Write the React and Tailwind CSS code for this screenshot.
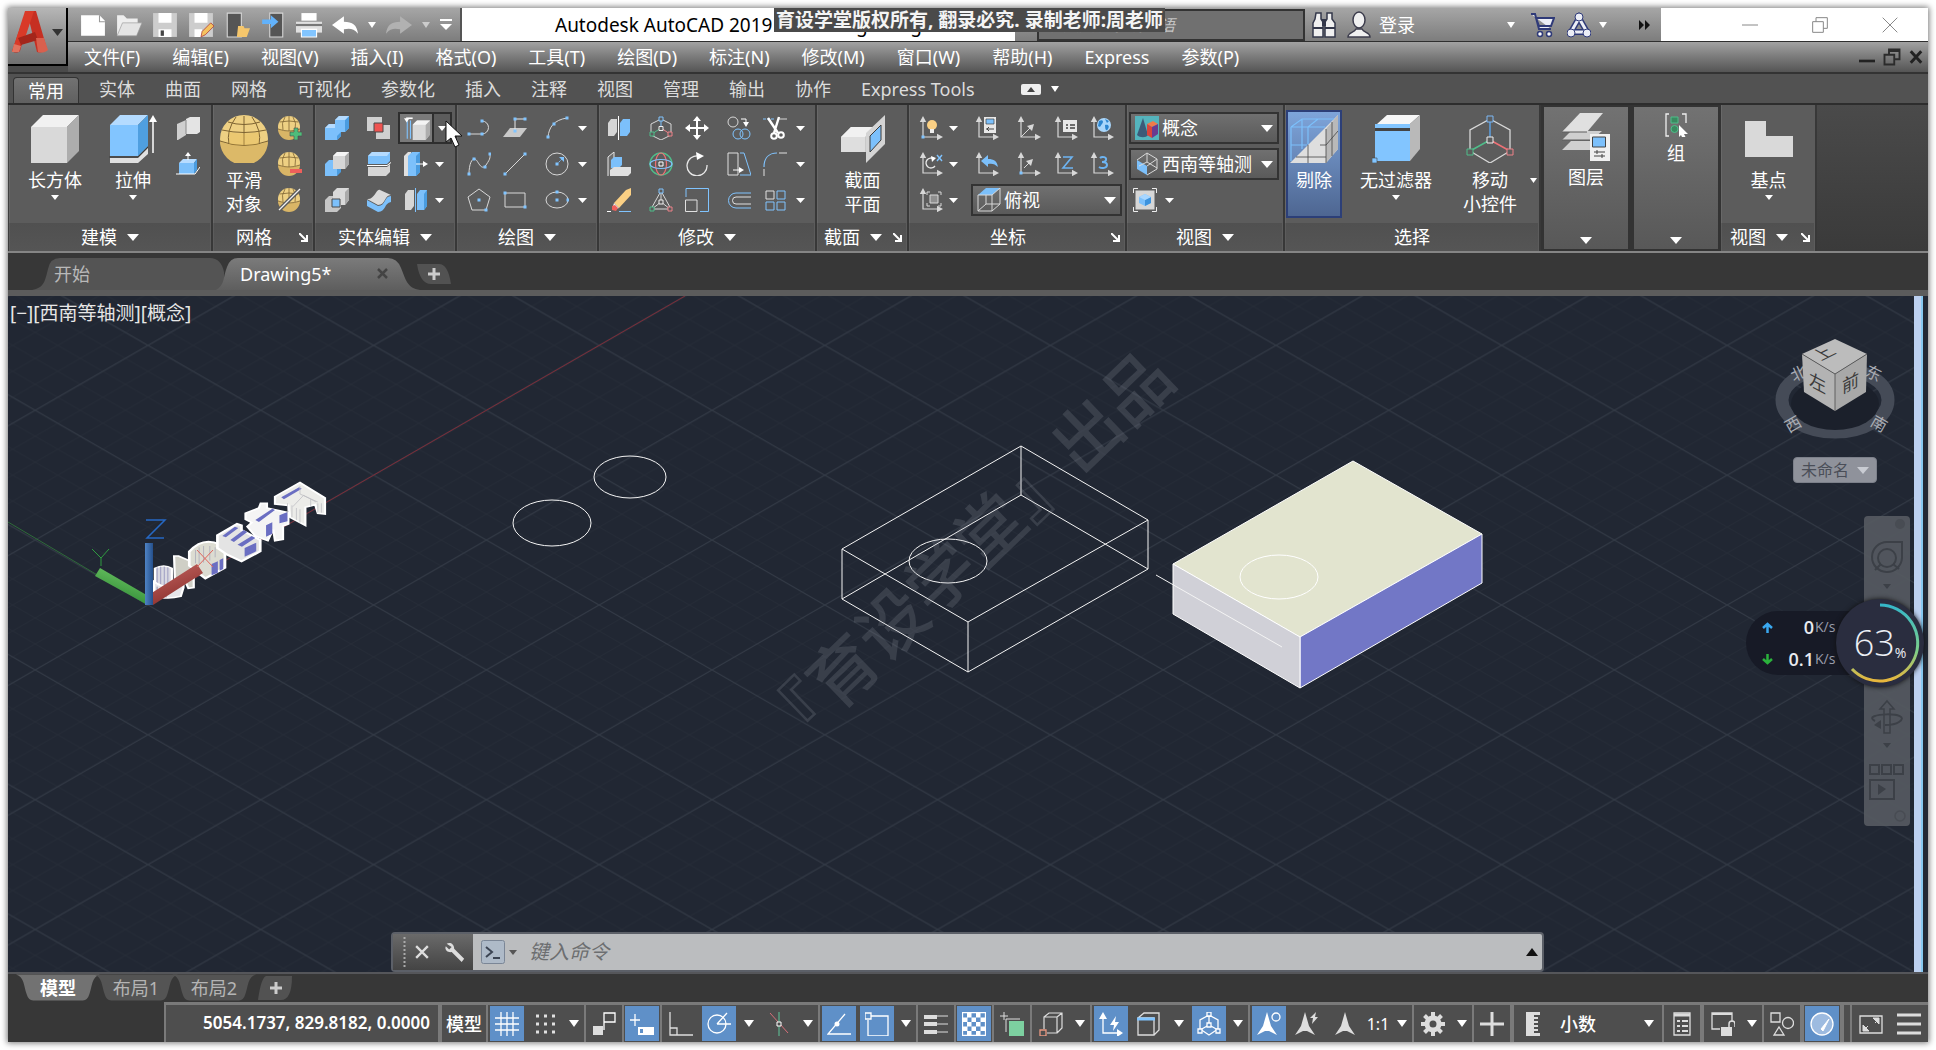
import React from 'react';

const Svg = ({ w = 24, h, vb, children, className = '' }) => (
  <svg width={w} height={h || w} viewBox={vb || '0 0 24 24'} fill="none" className={`shrink-0 ${className}`} aria-hidden="true">
    {children}
  </svg>
);

const Down = ({ w = 8, h = 5, fill = '#fff', className = '' }) => (
  <svg width={w} height={h} viewBox="0 0 10 6" preserveAspectRatio="none" className={`shrink-0 ${className}`} aria-hidden="true">
    <path d="M0 0h10L5 6z" fill={fill} />
  </svg>
);

const Ball = () => (
  <>
    <circle cx="11" cy="11" r="11" fill="#eed083" />
    <path d="M0 13c6 3 16 3 22 0a11 11 0 0 1-22 0" fill="#d9b566" />
    <path d="M1.500 6q9.500-2 19 0M0 13q11 4 22 0M7 1Q3 7 5 14M15 1q4 6 2 13M11 0v15" stroke="#7d6332" strokeWidth=".8" />
  </>
);

const Axes = ({ children }) => (
  <>
    <path d="M4 5v16h15" stroke="#d8d8d8" strokeWidth="1.200" />
    <path d="M4 0 .8 6h6.400zM24 21l-6-3.200v6.400z" fill="#d8d8d8" />
    {children}
  </>
);

const Dots = ({ at }) => at.map(([x, y]) => <rect key={`${x}-${y}`} x={x - 1.500} y={y - 1.500} width="3" height="3" fill="#80c4ff" />);

const ICONS = {
  polysolid: (
    <>
      <path d="M1 8 10 4v15l-8 5H1z" fill="#cfcfcf" />
      <path d="M10 3 14 1h10v15l-3 2H10z" fill="#e4e4e4" />
      <path d="M10 4v14" stroke="#888" />
    </>
  ),
  presspull: (
    <>
      <path d="M3 11 7 7h14l-3 4z" fill="#b7dcff" />
      <path d="M3 11h15v11H3z" fill="#7cc0fb" />
      <path d="m18 11 3-4v11l-3 4z" fill="#4a9ce0" />
      <path d="M0 22h19l5-7M12 8V2" stroke="#fff" />
      <path d="m12 0-3 4h6z" fill="#fff" />
    </>
  ),
  ballAdd: (
    <>
      <Ball />
      <path d="M16 12h4v4h4v4h-4v4h-4v-4h-4v-4h4z" fill="#4fbd7a" stroke="#4b4b4b" strokeWidth=".6" />
    </>
  ),
  ballSub: (
    <>
      <Ball />
      <path d="M12 17h12v4H12z" fill="#ee5f5b" />
    </>
  ),
  ballCut: (
    <>
      <Ball />
      <path d="M1 22 22 1" stroke="#5a5a5a" strokeWidth="4" />
      <path d="M1 22 22 1" stroke="#f0f0f0" strokeWidth="1.300" />
    </>
  ),
  union: (
    <>
      <path d="M0 12 4 8h6V4l4-4h10v12l-4 4h-4v4l-4 4H0z" fill="#7cc0fb" />
      <path d="m20 4 4-4v12l-4 4zM12 20l4-4v4l-4 4z" fill="#4a9ce0" />
      <path d="m10 4 4-4h10l-4 4zM0 12l4-4h6v4z" fill="#b4dbff" />
    </>
  ),
  subtract: (
    <>
      <path d="M0 12 4 8h12l-4 16H0z" fill="#7cc0fb" />
      <path d="m12 24 4-4V8l-4 4z" fill="#4a9ce0" />
      <path d="M8 4 12 0h12v12l-4 5H8z" fill="#d6d6d6" />
      <path d="m20 4 4-4v12l-4 5z" fill="#aaa" />
      <path d="m8 4 4-4h12l-4 4z" fill="#f4f4f4" />
    </>
  ),
  intersect: (
    <>
      <path d="M0 12 4 8h12v12l-4 4H0z" fill="#c6c6c6" />
      <path d="M8 4 12 0h12v12l-4 5H8z" fill="#d9d9d9" />
      <path d="m20 4 4-4v12l-4 5z" fill="#aaa" />
      <path d="M7 11h8v8H7z" fill="#7cc0fb" stroke="#4b4b4b" />
    </>
  ),
  interfere: (
    <>
      <path d="M0 1h15v14H0zM9 9h14v14H9z" fill="#d0d0d0" />
      <path d="M7 7h9v9H7z" fill="#ef5350" stroke="#4b4b4b" />
    </>
  ),
  slice: (
    <>
      <path d="M1 4 5 0h18v9l-3 3H1z" fill="#7cc0fb" />
      <path d="m1 4 4-4h18l-3 4z" fill="#b4dbff" />
      <path d="M1 15h19l3-3v8l-4 4H1z" fill="#d6d6d6" />
      <path d="M0 13.500h20l4-3" stroke="#fff" />
    </>
  ),
  thicken: (
    <>
      <path d="M0 11C8 12 9 0 13 2l11 5c-7 0-5 10-13 10z" fill="#dadada" />
      <path d="m0 12 11 6c8 0 6-10 13-10v6c-7 1-5 10-13 10L0 18z" fill="#7cc0fb" />
    </>
  ),
  extrudeFace: (
    <>
      <path d="M6 5v17M3 5v17" stroke="#80c4ff" />
      <path d="M2 3h6" stroke="#fff" strokeWidth="1.500" />
      <path d="M0 3h5l-2.500 4zM3 1h5" fill="#fff" />
      <path d="m8 9 4-4h12v13l-4 5H8z" fill="#d9d9d9" />
      <path d="m20 9 4-4v13l-4 5z" fill="#adadad" />
      <path d="m8 9 4-4h12l-4 4z" fill="#f4f4f4" />
    </>
  ),
  moveFace: (
    <>
      <path d="m0 4 4-4h3v20l-3 4H0z" fill="#e0e0e0" />
      <path d="m4 4 4-4h8v20l-4 4H4z" fill="#7cc0fb" />
      <path d="m12 4 4-4v20l-4 4z" fill="#4a9ce0" />
      <path d="M12 12h10" stroke="#fff" />
      <path d="m24 12-5-3v6z" fill="#fff" />
    </>
  ),
  separate: (
    <>
      <path d="m1 6 3-4h6v16l-3 4H1z" fill="#d6d6d6" />
      <path d="m13 6 3-4h7v16l-3 4h-7z" fill="#7cc0fb" />
      <path d="m20 6 3-4v16l-3 4z" fill="#4a9ce0" />
      <path d="M11.500 0v24" stroke="#80c4ff" />
    </>
  ),
  polyline: (
    <>
      <path d="M1 18h14a6 6 0 0 0 0-13" stroke="#d8d8d8" />
      <Dots at={[[2, 18], [15, 18], [15, 5]]} />
    </>
  ),
  poly3d: (
    <>
      <path d="m0 21 7-9h17l-7 9z" fill="#c9c9c9" />
      <path d="M12 16V3h10" stroke="#e8e8e8" />
      <Dots at={[[12, 15], [12, 3], [22, 3]]} />
    </>
  ),
  arc: (
    <>
      <path d="M3 21C4 11 9 4 22 2" stroke="#d8d8d8" />
      <Dots at={[[3, 21], [9, 8], [22, 2]]} />
    </>
  ),
  spline: (
    <>
      <path d="M2 22C2 12 5 6 8 7s6 13 11 6 4-8 4-12" stroke="#d8d8d8" />
      <Dots at={[[2, 22], [7, 7], [18, 15], [23, 2]]} />
    </>
  ),
  line: (
    <>
      <path d="M2 22 22 2" stroke="#d8d8d8" />
      <Dots at={[[2, 22], [22, 2]]} />
    </>
  ),
  circle: (
    <>
      <circle cx="12" cy="12" r="11" stroke="#d8d8d8" />
      <path d="m12 12 5-5" stroke="#80c4ff" strokeDasharray="2 1" />
      <path d="M19 5h-5l5 5z" fill="#80c4ff" />
      <Dots at={[[12, 12]]} />
    </>
  ),
  polygon: (
    <>
      <path d="M12 1 23 9l-4 13H5L1 9z" stroke="#d8d8d8" />
      <Dots at={[[12, 12], [19, 22]]} />
    </>
  ),
  rect: (
    <>
      <path d="M2 5h20v14H2z" stroke="#d8d8d8" />
      <Dots at={[[2, 5], [22, 19]]} />
    </>
  ),
  ellipse: (
    <>
      <ellipse cx="12" cy="12" rx="11" ry="8" stroke="#d8d8d8" />
      <Dots at={[[12, 12], [12, 4], [23, 12]]} />
    </>
  ),
  mirror3d: (
    <>
      <path d="m1 7 3-4h6v13l-3 4H1z" fill="#d6d6d6" />
      <path d="m13 7 3-4h7v13l-3 4h-7z" fill="#7cc0fb" />
      <path d="M11.500 0v24" stroke="#fff" />
    </>
  ),
  gizmo: (
    <>
      <path d="M12 3 22 8v11l-10 5L2 19V8z" stroke="#d8d8d8" />
      <path d="M12 3v9" stroke="#80c4ff" />
      <path d="m12 12-9 6" stroke="#4fbd8a" />
      <path d="m12 12 9 6" stroke="#ee8188" />
      <path d="M10 1h4v4h-4z" fill="#5c5c5c" stroke="#80c4ff" />
      <path d="M10 10.500h4v4h-4z" fill="#5c5c5c" stroke="#eee" />
      <path d="M1 16h4v4H1z" fill="#5c5c5c" stroke="#4fbd8a" />
      <path d="M19 16h4v4h-4z" fill="#5c5c5c" stroke="#ee8188" />
    </>
  ),
  move: (
    <path d="m12 0 4 5h-3v6h6V8l5 4-5 4v-3h-6v6h3l-4 5-4-5h3v-6H5v3l-5-4 5-4v3h6V5H8z" fill="#fff" />
  ),
  copy: (
    <>
      <circle cx="6" cy="6" r="5" stroke="#d8d8d8" />
      <path d="M14 3h5v5" stroke="#fff" />
      <path d="m19 11-3-5h6z" fill="#fff" />
      <circle cx="11" cy="18" r="5" stroke="#80c4ff" />
      <circle cx="18" cy="18" r="5" stroke="#80c4ff" />
    </>
  ),
  trim: (
    <>
      <path d="M0 3h11" stroke="#80c4ff" strokeDasharray="3 1" />
      <path d="M15 3h9" stroke="#d8d8d8" />
      <path d="M5 2 15 17M16 1l-5 16" stroke="#fff" strokeWidth="2.400" />
      <circle cx="11" cy="20" r="2.800" stroke="#fff" strokeWidth="2" />
      <circle cx="18" cy="19" r="2.800" stroke="#fff" strokeWidth="2" />
    </>
  ),
  align: (
    <>
      <path d="M1 24V5l6-5v18" fill="#6e6e6e" stroke="#e8e8e8" />
      <path d="m4 8 3-3h8v8l-3 3H4z" fill="#7cc0fb" />
      <path d="m3 18 4-3h17v6l-3 3H3z" fill="#e0e0e0" />
    </>
  ),
  rotate3d: (
    <>
      <circle cx="12" cy="12" r="11" stroke="#4fbd8a" strokeWidth="1.400" />
      <ellipse cx="12" cy="12" rx="5.500" ry="11" stroke="#ee7176" strokeWidth="1.200" />
      <ellipse cx="12" cy="12" rx="11" ry="4.500" stroke="#80c4ff" strokeWidth="1.200" />
      <path d="M10 10h4v4h-4z" fill="#5c5c5c" stroke="#fff" />
    </>
  ),
  rotate: (
    <>
      <path d="M14 4a10 10 0 1 0 8 9" stroke="#e8e8e8" strokeWidth="1.300" />
      <path d="m11 0 8 4-7 4z" fill="#fff" />
    </>
  ),
  stretch: (
    <>
      <path d="M1 1h10v22H1z" stroke="#e0e0e0" />
      <path d="M13 1h4l7 22H13" stroke="#80c4ff" />
      <path d="M6 18h8" stroke="#fff" />
      <path d="m17 18-5-3v6z" fill="#fff" />
    </>
  ),
  fillet: (
    <>
      <path d="M1 15C1 6 6 1 14 1" stroke="#80c4ff" strokeWidth="1.200" />
      <path d="M1 17v7M16 1h8" stroke="#e0e0e0" />
    </>
  ),
  erase: (
    <>
      <path d="m7 15 12-13 5-2v7L12 20z" fill="#fbd084" />
      <path d="m7 15 5 5-3 1-3-3z" fill="#eee" />
      <path d="m5 18 3-1 3 3-2 3-4-1z" fill="#ee5f5b" />
      <path d="M0 23.500h4" stroke="#fff" />
      <path d="M12 23.500h12" stroke="#80c4ff" />
    </>
  ),
  scale3d: (
    <>
      <path d="M12 3 2 21h20z" stroke="#d8d8d8" />
      <path d="M12 3v12M12 14l-9 7M12 14l9 7" stroke="#d8d8d8" />
      <path d="M10 1h4v4h-4z" fill="#5c5c5c" stroke="#80c4ff" />
      <path d="M10 12h4v4h-4z" fill="#5c5c5c" stroke="#eee" />
      <path d="M1 19h4v4H1z" fill="#5c5c5c" stroke="#4fbd8a" />
      <path d="M19 19h4v4h-4z" fill="#5c5c5c" stroke="#ee8188" />
    </>
  ),
  scale: (
    <>
      <path d="M1 9V.5h22.500v23H15" stroke="#80c4ff" />
      <path d="M.5 12H12v11.500H.5z" stroke="#e0e0e0" />
    </>
  ),
  offset: (
    <>
      <path d="M24 5H9a7 7 0 0 0 0 15h15" stroke="#80c4ff" />
      <path d="M24 9H9a3.500 3.500 0 0 0 0 7h15" stroke="#e0e0e0" />
    </>
  ),
  array: (
    <>
      <path d="M3 3h8v8H3z" stroke="#e0e0e0" />
      <path d="M14 3h8v8h-8zM3 14h8v8H3zM14 14h8v8h-8z" stroke="#80c4ff" />
    </>
  ),
  ucsBulb: (
    <Axes>
      <circle cx="13" cy="9" r="5" fill="#fbd084" />
      <path d="M11 13h4v4h-4z" fill="#eee" />
      <Dots at={[[4, 21]]} />
    </Axes>
  ),
  ucsNamed: (
    <Axes>
      <path d="M9 1h12v16H9z" fill="#e8e8e8" />
      <path d="M11 3h8v5h-8z" fill="#7cc0fb" stroke="#444" strokeWidth=".7" />
      <path d="M11 13h8M14 11l-2 2 2 2" stroke="#444" />
    </Axes>
  ),
  ucsOrigin: (
    <Axes>
      <path d="M4 21 14 11" stroke="#d8d8d8" />
      <path d="m17 8-7 2 5 5z" fill="#d8d8d8" />
    </Axes>
  ),
  ucsList: (
    <Axes>
      <path d="M9 4h14v12H9z" fill="#e8e8e8" />
      <path d="M12 9h2M16 9h5M12 12h2M16 12h5" stroke="#444" strokeWidth="1.400" />
    </Axes>
  ),
  ucsWorld: (
    <Axes>
      <circle cx="14" cy="9" r="7" fill="#a9d6fb" />
      <path d="M9 5c4-2 5 1 3 3s-1 4-4 2zM15 9c3-1 5 1 3 4s-3 0-3-4zM15 3l4 2-2 2z" fill="#2c86d1" />
    </Axes>
  ),
  ucsRotX: (
    <Axes>
      <path d="M15 7a5 5 0 1 0 1 7" stroke="#e8e8e8" strokeWidth="1.300" />
      <path d="m12 4 5 2-4 4z" fill="#fff" />
      <path d="m18 3 5 6M23 3l-5 6" stroke="#80c4ff" strokeWidth="1.400" />
    </Axes>
  ),
  ucsPrev: (
    <Axes>
      <path d="m6 9 7-6v4c6 0 9 2 10 8-3-3-6-4-10-3v3z" fill="#7cc0fb" />
    </Axes>
  ),
  ucsPoint: (
    <Axes>
      <path d="m7 16 6-6" stroke="#d8d8d8" />
      <path d="m16 7-7 2 5 5z" fill="#d8d8d8" />
      <Dots at={[[4, 21]]} />
    </Axes>
  ),
  ucsZ: (
    <Axes>
      <path d="M9 5h9L9 16h10" stroke="#6db4f2" strokeWidth="1.600" />
    </Axes>
  ),
  ucs3: (
    <Axes>
      <path d="M10 6c2-2 7-1 6 2-.5 2-3 2-4 2 2 0 5 0 5 3s-5 4-8 2" stroke="#6db4f2" strokeWidth="2" />
    </Axes>
  ),
  ucsFrame: (
    <Axes>
      <path d="M11 7h8v8h-8z" fill="#8f8f8f" stroke="#d8d8d8" />
      <path d="M8 7V4h3M19 4h3v3M22 15v3h-3M11 18H8v-3" stroke="#d8d8d8" />
    </Axes>
  ),
  viewport: (
    <>
      <path d="M2.500 2.500h19v19h-19z" fill="#d6d6d6" />
      <path d="M.5 5V.5H5M19 .5h4.500V5M23.500 19v4.500H19M5 23.500H.5V19" stroke="#eee" />
      <path d="m12 6 6 3v6l-6 3-6-3V9z" fill="#7cc0fb" />
      <path d="m12 12 6-3v6l-6 3z" fill="#3d93dd" />
      <path d="m12 6 6 3-6 3-6-3z" fill="#a8d6ff" />
    </>
  ),
};

const Box48 = () => (
  <Svg w={48} vb="0 0 48 48">
    <path d="M0 12 12 0h36L36 12z" fill="#f1f1f1" />
    <path d="M0 12h36v36H0z" fill="#d9d9d9" />
    <path d="M36 12 48 0v36L36 48z" fill="#adadad" />
  </Svg>
);

const Extrude48 = () => (
  <Svg w={48} vb="0 0 48 48">
    <path d="M1 10 11 0h28L29 10z" fill="#b4dbff" />
    <path d="M1 10h28v31H1z" fill="#82c5ff" />
    <path d="M29 10 39 0v31L29 41z" fill="#4f9fe0" />
    <path d="M1 43h28l10-10v6l-10 9H1z" fill="#e0e0e0" />
    <path d="M0 42h29l10-10" stroke="#3c3c3c" />
    <path d="M44 38V6" stroke="#fff" strokeWidth="1.500" />
    <path d="m44 0-4 7h8z" fill="#fff" />
  </Svg>
);

const Sphere48 = () => (
  <Svg w={48} vb="0 0 48 48">
    <circle cx="24" cy="24" r="24" fill="#eed083" />
    <path d="M0 26c10 6 38 6 48 0a24 24 0 0 1-48 0" fill="#dcb968" />
    <path d="M24 1v29M8 7q16 5 32 0M2 15q22 5 44 0M0 26q24 9 48 0M16 2Q6 16 9 29M32 2q10 14 7 27" stroke="#7d6332" />
    <path d="M9 17q15 3 30 0v12q-15 3-30 0z" fill="#e6b94f" opacity=".35" />
  </Svg>
);

const Section48 = () => (
  <Svg w={48} vb="0 0 48 48">
    <path d="M2 22 12 12h24v16L28 37H2z" fill="#c9c9c9" />
    <path d="M2 22 12 12h22L26 22z" fill="#f1f1f1" />
    <path d="M2 22h24v15H2z" fill="#dedede" />
    <path d="M27 18 46 0v29L27 48z" fill="#d4d4d4" />
    <path d="m31 21 11-11v15L31 37z" fill="#7cc0fb" stroke="#3c3c3c" />
  </Svg>
);

const Culling48 = () => (
  <Svg w={48} vb="0 0 48 48">
    <path d="M0 48 48 0v34L36 48z" fill="#dedede" />
    <path d="M36 14 48 0v34L36 48z" fill="#b9b9b9" />
    <path d="M18 30v18M36 14v34M6 42h30M30 30h6l12-14M42 7v34" stroke="#444" strokeWidth=".8" />
    <path d="M1 12h34M1 12v34M1 30h16M18 12v17M1 12 12 4h32M12 4v30M28 4 18 12" stroke="#7cc0fb" strokeWidth="1.200" />
  </Svg>
);

const Filter48 = () => (
  <Svg w={48} vb="0 0 48 48">
    <path d="M5 9 15 0h33L38 9z" fill="#f6f6f6" />
    <path d="M38 9 48 0v34L38 46z" fill="#b9b9b9" />
    <path d="M3 9h35v4H3zM3 16h35v30H3z" fill="#82c5ff" />
    <path d="M3 13h35v3H3z" fill="#444" />
    <path d="M0 43h5v5H0z" fill="#82c5ff" stroke="#444" strokeWidth=".6" />
  </Svg>
);

const Gizmo48 = () => (
  <Svg w={48} vb="0 0 48 48">
    <path d="M24 4 44 15v21L24 48 4 36V15z" stroke="#d8d8d8" strokeWidth="1.300" />
    <path d="M24 4v21" stroke="#5b9fe0" strokeWidth="1.500" />
    <path d="M24 25 4 36" stroke="#4fbd8a" strokeWidth="1.500" />
    <path d="m24 25 20 11" stroke="#ee7176" strokeWidth="1.500" />
    <path d="M21 1h6v6h-6z" fill="#5c5c5c" stroke="#7cb8f5" />
    <path d="M21 22h6v6h-6z" fill="#5c5c5c" stroke="#eee" />
    <path d="M1 34h6v6H1z" fill="#5c5c5c" stroke="#4fbd8a" />
    <path d="M41 34h6v6h-6z" fill="#5c5c5c" stroke="#ee8188" />
  </Svg>
);

const Layers48 = () => (
  <Svg w={48} vb="0 0 48 48">
    <path d="M0 37 9 28h30L29 37zM0 27l9-9h31L30 27z" fill="#cfcfcf" />
    <path d="M0 19 18 0h23L25 19z" fill="#e0e0e0" />
    <path d="M0 27h29M0 19h25" stroke="#5c5c5c" />
    <path d="M28 21h20v27H28z" fill="#f0f0f0" />
    <path d="M30.500 24h13v10h-13z" fill="#7cc0fb" stroke="#444" />
    <path d="M32 39h11M32 43h11M35 37v4M40 41v4" stroke="#444" />
  </Svg>
);

const MENU = ['文件(F)', '编辑(E)', '视图(V)', '插入(I)', '格式(O)', '工具(T)', '绘图(D)', '标注(N)', '修改(M)', '窗口(W)', '帮助(H)', 'Express', '参数(P)'];
const TABS = ['实体', '曲面', '网格', '可视化', '参数化', '插入', '注释', '视图', '管理', '输出', '协作', 'Express Tools'];

const Panel = ({ title, w, arrow, launcher, children }) => (
  <section className={`flex flex-col shrink-0 border-r-2 border-[#383838] bg-[#5c5c5c] ${w}`}>
    <div className="flex h-[118px] pt-[5px] border-l border-[#686868]">{children}</div>
    <h2 className="flex items-center h-7 mx-px text-white bg-linear-to-b from-[#505050] to-[#555555]">
      <span className="flex flex-1 items-center justify-center gap-[10px] leading-6">
        {title}
        {arrow && <Down w={12} h={7} />}
      </span>
      {launcher && (
        <button aria-label={`${title}设置`} className="flex justify-end w-[18px] pr-1">
          <Svg w={9} vb="0 0 9 9">
            <path d="m0 0 7 7M8 2v6H2" stroke="#fff" strokeWidth="2" />
          </Svg>
        </button>
      )}
    </h2>
  </section>
);

const Big = ({ icon, lines, arrow, w, className = '' }) => (
  <button className={`flex flex-col items-center pt-[5px] text-white leading-6 ${w} ${className}`}>
    {icon}
    <span className="mt-[5px] whitespace-nowrap">
      {lines.map((l) => (
        <span key={l} className="block">{l}</span>
      ))}
    </span>
    {arrow && <Down className="mt-[3px]" />}
  </button>
);

const Tool = ({ name }) => (
  <button aria-label={name} className="flex items-center h-6">
    {name === 'v' ? <Down w={9} h={5} /> : <Svg>{ICONS[name]}</Svg>}
  </button>
);

const Tools = ({ cols, items, children }) => (
  <div className={`grid auto-rows-[36px] items-center ${cols}`}>
    {items.map((n, i) => <Tool key={i} name={n} />)}
    {children}
  </div>
);

const Drop = ({ label, value, icon, className = '' }) => (
  <label className={`flex items-center h-8 px-1 border-2 border-[#333] bg-linear-to-b from-[#707070] to-[#5a5a5a] ${className}`}>
    {icon}
    <select aria-label={label} className="appearance-none flex-1 min-w-0 pl-[3px] h-7 leading-6 text-white outline-none" defaultValue={value}>
      <option>{value}</option>
    </select>
    <Down w={12} h={7} />
  </label>
);

const Title = () => (
  <div className="flex h-[34px] border-b border-[#2f2f2f] bg-linear-to-b from-[#a6a6a6] to-[#7d7d7d]">
    <div className="flex items-center w-[394px] pl-3 gap-[10px] border-r-2 border-[#555]">
      <button aria-label="新建"><Svg w={26} h={26}><path d="M1 3h17l5 5v14H1z" fill="#fff" /><path d="M18 3v6h5" stroke="#999" /></Svg></button>
      <button aria-label="打开"><Svg w={26} h={26}><path d="M1 22V3h6l3 3h10v5" fill="#eee" /><path d="m1 22 5-12h18l-5 12z" fill="#e4e4e4" stroke="#999" strokeWidth=".6" /></Svg></button>
      <button aria-label="保存"><Svg w={26} h={26}><path d="M1 1h22v22H1z" fill="#cdcdcd" /><path d="M6 1h12v9H6zM6 16h12v7H6z" fill="#fff" /><path d="M8 17h3v5H8z" fill="#444" /></Svg></button>
      <button aria-label="另存为"><Svg w={26} h={26}><path d="M1 1h22v22H1z" fill="#cdcdcd" /><path d="M6 1h12v9H6zM6 16h7v7H6z" fill="#fff" /><path d="m12 23 1-5 8-8 3 3-8 8z" fill="#f5c25f" stroke="#a33" strokeWidth=".7" /></Svg></button>
      <button aria-label="从移动设备打开"><Svg w={26} h={26}><path d="M3 1h13v22H3z" fill="#555" stroke="#d6d6d6" /><path d="m12 22 1-9h5l1 2h5l-3 8h-9z" fill="#f5c66c" /></Svg></button>
      <button aria-label="保存到移动设备"><Svg w={26} h={26}><path d="M9 1h12v22H9z" fill="#555" stroke="#d6d6d6" /><path d="M2 7h8V3l7 6-7 6v-4H2z" fill="#62b2fb" /></Svg></button>
      <button aria-label="打印"><Svg w={26} h={26}><path d="M5 1h14v7H5z" fill="#fff" /><path d="M0 9h24v10H0z" fill="#e0e0e0" /><path d="M0 11h24v2H0z" fill="#777" /><path d="M5 16h14v7H5z" fill="#82c5ff" stroke="#fff" /></Svg></button>
      <button aria-label="放弃" className="flex items-center gap-[10px]"><Svg w={26} h={26}><path d="m0 12 11-8v5c8 0 12 3 13 11-4-5-8-5-13-4v4z" fill="#fff" /></Svg><Down w={8} h={6} /></button>
      <button aria-label="重做" className="flex items-center gap-[10px]"><Svg w={26} h={26}><path d="M24 12 13 4v5C5 9 1 12 0 20c4-5 8-5 13-4v4z" fill="#b1b1b1" /></Svg><Down w={8} h={6} fill="#ccc" /></button>
      <button aria-label="自定义"><Svg w={12} h={12} vb="0 0 12 12"><path d="M0 1h12" stroke="#fff" strokeWidth="2" /><path d="M0 5h12l-6 6z" fill="#fff" /></Svg></button>
    </div>
    <h1 className="flex items-center justify-center w-[553px] gap-5 bg-white text-black text-[19px] leading-8 whitespace-nowrap">
      <span>Autodesk AutoCAD 2019</span>
      <span>Drawing5.dwg</span>
    </h1>
    <div className="flex flex-1 items-center min-w-0">
      <input aria-label="搜索" placeholder="键入关键字或短语" className="ml-[22px] w-[268px] h-8 pl-2 border-2 border-[#333] bg-[#707070] text-base italic placeholder-[#c4c4c4]" />
      <button aria-label="查找" className="ml-[6px]"><Svg w={26} h={28} vb="0 0 26 28"><path d="M5 2h5v6l2 3v15H2V12l2-4zM16 2h5v6l3 4v14H14V11l2-3z" fill="#f0f0f0" stroke="#33374a" strokeWidth="1.500" /><path d="M2 17h10M14 17h10M12 9h2v5h-2z" stroke="#33374a" strokeWidth="2" /></Svg></button>
      <button className="flex items-center ml-[10px] text-white leading-8">
        <Svg w={24} h={28} vb="0 0 24 28" className="mr-2"><ellipse cx="12" cy="9" rx="6" ry="8" fill="#f0f0f0" stroke="#3c3c4c" strokeWidth="1.500" /><path d="M1 26c0-5 6-4 8-8h6c2 4 8 3 8 8z" fill="#f0f0f0" stroke="#3c3c4c" strokeWidth="1.500" /></Svg>
        登录
        <Down w={8} h={6} className="ml-[92px]" />
      </button>
      <button aria-label="应用商店" className="ml-4"><Svg w={24} h={26} vb="0 0 24 26"><path d="M0 2h4l4 15h12M5 6h18l-3 8H8z" fill="#eceef6" stroke="#2f3a78" strokeWidth="2" /><circle cx="9" cy="22" r="2.500" fill="#fff" stroke="#2f3a78" strokeWidth="1.500" /><circle cx="18" cy="22" r="2.500" fill="#fff" stroke="#2f3a78" strokeWidth="1.500" /></Svg></button>
      <button aria-label="A360" className="flex items-center gap-2 ml-3"><Svg w={24} h={26} vb="0 0 24 26"><path d="m12 6 8 14H4z" stroke="#2f3a78" strokeWidth="6" /><path d="m12 6 8 14H4z" stroke="#eceef6" strokeWidth="3" /><circle cx="12" cy="5" r="4" fill="#eceef6" stroke="#2f3a78" /><circle cx="4" cy="21" r="4" fill="#eceef6" stroke="#2f3a78" /><circle cx="20" cy="21" r="4" fill="#eceef6" stroke="#2f3a78" /></Svg><Down w={8} h={6} /></button>
      <button aria-label="更多" className="ml-8"><Svg w={11} h={10} vb="0 0 11 10"><path d="m0 0 5 5-5 5zM6 0l5 5-5 5z" fill="#111" /></Svg></button>
    </div>
    <div className="flex items-center justify-end w-[267px] pr-[30px] gap-[54px] bg-white">
      <button aria-label="最小化"><Svg w={16}><path d="M0 12h24" stroke="#888" strokeWidth="1.500" /></Svg></button>
      <button aria-label="还原"><Svg w={16}><path d="M1 7h16v16H1zM6 7V1h17v16h-6" stroke="#888" strokeWidth="1.500" /></Svg></button>
      <button aria-label="关闭"><Svg w={16}><path d="m1 1 22 22M23 1 1 23" stroke="#888" strokeWidth="1.500" /></Svg></button>
    </div>
  </div>
);

const Header = () => (
  <header className="relative flex h-[66px] shrink-0 border-b-2 border-[#333] bg-[#565656]">
    <div className="w-[60px] bg-[#4a4a4a]">
      <button aria-label="应用程序菜单" className="flex items-center w-[60px] h-[58px] pl-1 pb-2 gap-[2px] border-r-2 border-b-2 border-black bg-linear-to-b from-[#b6b6b6] to-[#6f6f6f]">
        <Svg w={38} h={42} vb="0 0 38 42">
          <path d="M14 0h10l11 38c-3 3-7 4-10 3L17 9 8 40c-2 2-6 2-8 0z" fill="#c62f22" />
          <path d="M13 0h9l-8 24-8 14-6 3z" fill="#d93a28" />
          <path d="m6 27 17-6 3 8-17 5z" fill="#a3261b" />
          <path d="M24 27h8l4 12c-3 3-8 3-10 2z" fill="#d9604e" />
          <path d="m2 33 7 2-2 6H0z" fill="#e0735f" />
        </Svg>
        <Down w={11} h={7} fill="#333" />
      </button>
    </div>
    <div className="flex-1 min-w-0">
      <Title />
      <nav className="flex items-center h-[30px] pl-4 gap-8 text-white bg-linear-to-b from-[#a2a2a2] to-[#555]">
        {MENU.map((m) => <button key={m} className="leading-6 whitespace-nowrap">{m}</button>)}
        <div className="flex flex-1 items-center justify-end gap-2 pr-[5px]">
          <button aria-label="最小化图形"><Svg w={16}><path d="M0 18h24" stroke="#222" strokeWidth="4" /></Svg></button>
          <button aria-label="还原图形"><Svg w={18}><path d="M2 9h13v13H2zM8 9V2h14v13h-7M8 4h14" stroke="#2b2b2b" strokeWidth="2.500" /></Svg></button>
          <button aria-label="关闭图形"><Svg w={14}><path d="m3 2 18 20M21 2 3 22" stroke="#222" strokeWidth="5" /></Svg></button>
        </div>
      </nav>
    </div>
    <div className="absolute left-[766px] top-0 h-6 px-[2px] text-[19px] leading-6 font-bold text-[#f4f4f4] bg-[#4a4a4a] whitespace-nowrap">
      育设学堂版权所有, 翻录必究. 录制老师:周老师
    </div>
  </header>
);

const RibbonTabs = () => (
  <nav className="flex items-center h-[31px] shrink-0 pl-[5px] pt-px gap-[30px] border-b-2 border-[#2d2d2d] bg-[#525252] text-[#dcdcdc]">
    <button className="self-end h-[26px] px-[14px] -mr-[10px] leading-6 rounded-t-sm border border-b-0 border-[#333] text-white bg-linear-to-b from-[#727272] to-[#606060]">常用</button>
    {TABS.map((t) => <button key={t} className="leading-6 whitespace-nowrap">{t}</button>)}
    <button aria-label="最小化功能区" className="flex items-center gap-[10px] ml-4">
      <Svg w={20} h={11} vb="0 0 20 11"><rect width="20" height="11" rx="2" fill="#eee" /><path d="m10 3 4 5H6z" fill="#444" /></Svg>
      <Down w={8} h={6} />
    </button>
  </nav>
);

const Collapsed = ({ icon, label }) => (
  <section className="flex w-[90px] shrink-0 px-[3px] py-[2px] bg-[#333]">
    <button className="flex flex-1 flex-col items-center pt-[6px] pb-[5px] text-white leading-6 bg-linear-to-b from-[#727272] to-[#585858]">
      {icon}
      <span className="mt-1">{label}</span>
      <Down w={12} h={7} className="mt-auto" />
    </button>
  </section>
);

const Ribbon = () => (
  <div className="flex h-[148px] shrink-0 pl-px border-b-2 border-[#858585] bg-linear-to-b from-[#4a4a4a] to-[#3a3a3a] overflow-hidden">
    <Panel title="建模" w="w-[204px]" arrow>
      <Big icon={<Box48 />} lines={['长方体']} arrow w="w-[78px] ml-[6px]" />
      <Big icon={<Extrude48 />} lines={['拉伸']} arrow w="w-[78px]" />
      <Tools cols="ml-1" items={['polysolid', 'presspull']} />
    </Panel>
    <Panel title="网格" w="w-[102px]" launcher>
      <Big icon={<Sphere48 />} lines={['平滑', '对象']} w="w-[60px]" />
      <Tools cols="ml-1" items={['ballAdd', 'ballSub', 'ballCut']} />
    </Panel>
    <Panel title="实体编辑" w="w-[142px]" arrow>
      <div className="grid auto-rows-[36px] items-center grid-cols-[42px_37px_31px_14px] pl-[9px]">
        <Tool name="union" />
        <Tool name="interfere" />
        <div className="col-span-2 flex h-8 -ml-[6px] w-[54px] border-2 border-[#2e2e2e]">
          <button aria-label="拉伸面" className="flex items-center pl-1 w-[34px] border-r-2 border-[#2e2e2e] bg-[#7a7a7a]"><Svg w={26}>{ICONS.extrudeFace}</Svg></button>
          <button aria-label="更多面操作" className="flex flex-1 items-center justify-center"><Down w={8} h={5} /></button>
        </div>
        {['subtract', 'slice', 'moveFace', 'v', 'intersect', 'thicken', 'separate', 'v'].map((n, i) => <Tool key={i} name={n} />)}
      </div>
    </Panel>
    <Panel title="绘图" w="w-[142px]" arrow>
      <Tools
        cols="grid-cols-[36px_42px_33px_14px] pl-[9px]"
        items={['polyline', 'poly3d', 'arc', 'v', 'spline', 'line', 'circle', 'v', 'polygon', 'rect', 'ellipse', 'v']}
      />
    </Panel>
    <Panel title="修改" w="w-[218px]" arrow>
      <Tools
        cols="grid-cols-[42px_36px_42px_36px_33px_14px] pl-[7px]"
        items={['mirror3d', 'gizmo', 'move', 'copy', 'trim', 'v', 'align', 'rotate3d', 'rotate', 'stretch', 'fillet', 'v', 'erase', 'scale3d', 'scale', 'offset', 'array', 'v']}
      />
    </Panel>
    <Panel title="截面" w="w-[92px]" arrow launcher>
      <Big icon={<Section48 />} lines={['截面', '平面']} w="w-full" />
    </Panel>
    <Panel title="坐标" w="w-[218px]" launcher>
      <Tools
        cols="grid-cols-[30px_26px_42px_37px_36px_32px] pl-[9px]"
        items={['ucsBulb', 'v', 'ucsNamed', 'ucsOrigin', 'ucsList', 'ucsWorld', 'ucsRotX', 'v', 'ucsPrev', 'ucsPoint', 'ucsZ', 'ucs3', 'ucsFrame', 'v']}
      >
        <Drop
          label="UCS"
          value="俯视"
          className="col-span-4 -ml-1"
          icon={<Svg><path d="M1 7 9 0h14l-8 7z" fill="#7cc0fb" /><path d="M1 7h14v16H1zM15 7l8-7v16l-8 7M1 23l8-7h14M9 16V7" stroke="#d8d8d8" /></Svg>}
        />
      </Tools>
    </Panel>
    <Panel title="视图" w="w-[158px]" arrow>
      <div className="grid auto-rows-[36px] items-center w-full pl-px pr-1">
        <Drop
          label="视觉样式"
          value="概念"
          icon={<Svg><path d="M0 0h24v24H0z" fill="#54b4bd" /><path d="m8 2 5 17c-2 3-8 3-11 0z" fill="#3c5a78" /><path d="m12 8 6-3 5 3-6 3z" fill="#f07a4a" /><path d="m12 8 5 3v11l-5-3z" fill="#d8443c" /><path d="m17 11 6-3v10l-6 4z" fill="#6a3a90" /></Svg>}
        />
        <Drop
          label="三维导航"
          value="西南等轴测"
          icon={<Svg><path d="m2 8 10 6v9L2 17z" fill="#7cc0fb" /><path d="m12 1 10 6v10l-10 6M12 1 2 8M12 1v9M22 7l-10 7M12 10 4 14M12 10l10 6" stroke="#d8d8d8" /></Svg>}
        />
        <div className="flex items-center gap-2 pl-1">
          <Tool name="viewport" />
          <Tool name="v" />
        </div>
      </div>
    </Panel>
    <Panel title="选择" w="w-[256px]">
      <Big icon={<Culling48 />} lines={['剔除']} w="w-[56px]" className="mb-[5px] outline-2 -outline-offset-2 outline-[#2c3f78] bg-linear-to-b from-[#7fa6dc] to-[#4d6590]" />
      <Big icon={<Filter48 />} lines={['无过滤器']} arrow w="w-[108px]" />
      <Big icon={<Gizmo48 />} lines={['移动', '小控件']} w="w-[80px]" />
      <button aria-label="小控件选项" className="pt-7"><Down w={7} h={5} /></button>
    </Panel>
    <Collapsed icon={<Layers48 />} label="图层" />
    <Collapsed
      icon={<Svg><path d="M5 1H2v22h3M18 1h4v9M19 1h3" stroke="#eee" strokeWidth="1.300" /><path d="M7 4h7v6H7z" fill="#3a8a60" stroke="#4fbd8a" /><circle cx="10.500" cy="16" r="3.500" fill="#3a8a60" stroke="#4fbd8a" /><path d="m15 12 9 9h-4l2 4-3 1-2-4-2 2z" fill="#fff" /></Svg>}
      label="组"
    />
    <Panel title="视图" w="w-[96px]" arrow launcher>
      <Big icon={<Svg w={48} vb="0 0 48 48"><path d="M0 6h21v15h27v21H0z" fill="#d9d9d9" /></Svg>} lines={['基点']} arrow w="w-full" />
    </Panel>
  </div>
);

const DocTabs = () => (
  <div className="flex items-end h-[43px] shrink-0 pl-6 border-b-[6px] border-[#5c5c5c] bg-[#373737]">
    <button className="relative w-[192px] h-[33px] pl-[22px] text-left leading-8 text-[#b9b9b9]">
      <Svg w={192} h={33} vb="0 0 192 33" className="absolute left-0 top-0"><path d="M0 33C12 31 13 24 16 12Q18 1 28 1h150q11 0 14 14v18z" fill="#545454" /></Svg>
      <span className="relative">开始</span>
    </button>
    <button className="relative flex items-center w-[204px] h-[33px] -ml-2 pl-6 text-left text-white">
      <Svg w={204} h={33} vb="0 0 204 33" className="absolute left-0 top-0">
        <defs><linearGradient id="doc" x2="0" y2="1"><stop stopColor="#7b7b7b" /><stop offset="1" stopColor="#5e5e5e" /></linearGradient></defs>
        <path d="M0 33C9 28 7 20 11 10Q14 1 22 1h150q9 0 13 10c5 12 6 20 19 22z" fill="url(#doc)" />
      </Svg>
      <span className="relative flex-1 leading-8">Drawing5*</span>
      <Svg w={11} vb="0 0 11 11" className="relative mr-8"><path d="m1 1 9 9M10 1l-9 9" stroke="#444" strokeWidth="2.500" /></Svg>
    </button>
    <button aria-label="新图形" className="relative flex items-center justify-center w-9 h-[26px] -ml-1 mb-[3px]">
      <Svg w={34} h={22} vb="0 0 34 22"><path d="M0 1h22q9 0 12 20H14Q3 21 0 1" fill="#525252" /><path d="M17 5v12M11 11h12" stroke="#ccc" strokeWidth="3" /></Svg>
    </button>
  </div>
);

// extruded lettering sitting along the X axis
const Lettering = () => (
  <g transform="translate(0 440) scale(.4464 .3333)" stroke="#fff" fill="none" strokeWidth="2">
    <path d="M347 385q20-14 38 0v50q-18 14-38 0z" fill="#d9d9e2" strokeWidth="5" />
    <path d="M352 382v58M360 380v62M368 380v62M376 382v58" stroke="#8a8ab8" />
    <path d="M345 425v40q25 16 60 4l6-26v-18l-20 14q-24 8-46-14z" fill="#e6e6ea" strokeWidth="5" />
    <path d="M352 440v30M362 446v26M372 448v25" stroke="#777a9c" />
    <path d="m390 348 10 0 34 20v75l-12 2-12-35-18 16z" fill="#cfcfc6" strokeWidth="5" />
    <path d="m424 378 18 6-10 22z" fill="#7074c4" stroke="none" />
    <path d="M424 335q30-45 68-22 14 12 12 40v30l-44 32-18-18-18-20z" fill="#dcdcd2" strokeWidth="6" />
    <path d="m474 372 14-8v34l-14 8zM492 360l8-5v32l-8 5z" fill="#6a6ec2" stroke="none" />
    <path d="M438 330v40M446 322v50M456 318v50M470 318v44M482 322v30" stroke="#a9a9b8" />
    <path d="m487 286 44-34 10 4v14l42 30v34l-42 30-32-20-22-20z" fill="#e4e4e4" strokeWidth="6" />
    <path d="m498 288 28-28 8 4-28 28zM516 300l30-30 8 6-30 30zM532 314l32-26 8 6-30 26zM548 324l26-16v26l-26 16z" fill="#6a6ec2" stroke="none" />
    <path d="m550 220 30-16 4-14h14v14l48 14v34l-12 6v40l-18 4-4-34-12 34-28-14-18-28 10-12-14-10z" fill="#f4f4f4" strokeWidth="5" />
    <path d="m572 240 38-34 6 4-36 36zM596 256l14-9v34l-14 9zM626 226l18-10v28l-18 6z" fill="#6a6ec2" stroke="none" />
    <path d="m616 170 56-42 56 46v48l-16-2-6-26-22 8v54l-34-24-4-36-30-4z" fill="#ecece9" strokeWidth="5" />
    <path d="m630 172 40-30 6 4-40 32z" fill="#6a6ec2" stroke="none" />
    <path d="m672 138 0 24 40 24M656 200l24-34 28 20M644 190v30M654 196v36M664 204v36M672 208v40M696 178v22M712 190v28M720 190v28" stroke="#bdbdc2" />
  </g>
);

const Drawing = () => (
  <svg className="absolute inset-0 w-full h-full" aria-label="模型空间">
    <defs>
      <pattern id="minor" x="140" y="309" width="45.120" height="25.960" patternUnits="userSpaceOnUse">
        <path d="M0 0l45.120 25.960M0 25.960 45.120 0" stroke="#272d39" strokeWidth=".8" />
      </pattern>
      <pattern id="major" x="140" y="309" width="225.600" height="129.800" patternUnits="userSpaceOnUse">
        <path d="M0 0l225.600 129.800M0 129.800 225.600 0" stroke="#343b47" strokeWidth="1" />
      </pattern>
      <linearGradient id="gx" x1="0" y1="0" x2=".5" y2="1"><stop stopColor="#c96a66" /><stop offset="1" stopColor="#8a2f2c" /></linearGradient>
      <linearGradient id="gy" x1="1" y1="0" x2=".5" y2="1"><stop stopColor="#7ad26e" /><stop offset="1" stopColor="#2f8a35" /></linearGradient>
      <linearGradient id="gz"><stop stopColor="#4f83c4" /><stop offset="1" stopColor="#25508c" /></linearGradient>
    </defs>
    <rect width="100%" height="100%" fill="url(#minor)" />
    <rect width="100%" height="100%" fill="url(#major)" />
    <g transform="translate(-8 -296)">
      <path d="M8 522 148 605" stroke="#2f6b3a" />
      <path d="M148 605 685 296" stroke="#7d2c38" />
      <Lettering />
      <path d="m153 605-6-9 50-32 6 9z" fill="url(#gx)" />
      <path d="m146 604-51-28 5-8 50 29z" fill="url(#gy)" />
      <path d="M145 543h8v62h-8z" fill="url(#gz)" />
      <path d="M146 520h19l-18 18h17" stroke="#2668c4" strokeWidth="1.500" fill="none" />
      <path d="m92 549 9 9 8-9M101 558v8" stroke="#2f9c40" fill="none" />
      <path d="m197 550 16 17M213 550l-16 17" stroke="#e0655c" />
      <g stroke="#f4f4f4" fill="none">
        <ellipse cx="630" cy="477" rx="36" ry="21" />
        <ellipse cx="552" cy="523" rx="39" ry="23" />
        <path d="m1021 446 127 74-180 102-126-73zM1021 495l127 74-180 103-126-73zM1021 446v49M1148 520v49M968 622v50M842 549v50" />
        <ellipse cx="948" cy="561" rx="39" ry="22" />
      </g>
      <path d="m1353 461 129 73-182 103-127-73z" fill="#e2e4cf" stroke="#fff" />
      <path d="m1482 534v49l-182 105v-51z" fill="#7277c6" stroke="#fff" />
      <path d="m1300 637v51l-127-74v-50z" fill="#d0d0d7" stroke="#fff" />
      <ellipse cx="1279" cy="577" rx="39" ry="22" stroke="#fff" fill="none" />
      <path d="m1156 575 126 72" stroke="#f4f4f4" />
      <text transform="translate(787 760) rotate(-44)" fontSize="68" fontWeight="500" fontFamily="'Noto Sans CJK SC', sans-serif" fill="#9aa0aa" fillOpacity=".2">『育设学堂』出品</text>
    </g>
  </svg>
);

const ViewCube = () => (
  <div className="absolute right-[21px] top-[36px] w-[116px] flex flex-col items-center">
    <svg width="124" height="112" viewBox="0 0 124 112" className="shrink-0" fontFamily="'Noto Sans CJK SC', sans-serif">
      <ellipse cx="62" cy="68" rx="53" ry="32" fill="none" stroke="#454b57" strokeWidth="13" />
      <ellipse cx="62" cy="72" rx="44" ry="26" fill="#1b202b" />
      <g fontSize="16" fill="#a9acb3">
        <text x="18" y="47" transform="rotate(-25 26 42)">北</text>
        <text x="92" y="47" transform="rotate(25 100 42)">东</text>
        <text x="12" y="98" transform="rotate(-30 20 92)">西</text>
        <text x="98" y="98" transform="rotate(30 107 92)">南</text>
      </g>
      <path d="m62 7 32 15-32 20-33-20z" fill="#bcbcbc" />
      <path d="m29 22 33 20v37L31 60z" fill="#b3b3b3" />
      <path d="m94 22-32 20v37l31-19z" fill="#a8a8a8" />
      <path d="m29 22 33 20 32-20M62 42v37" stroke="#4b4b4b" fill="none" strokeWidth=".8" />
      <g fontSize="18" fill="#3c3c3c">
        <text transform="matrix(.9 -.45 .9 .5 48 29)">上</text>
        <text transform="matrix(.95 .5 0 1 36 53)">左</text>
        <text transform="matrix(.95 -.5 0 1 69 62)">前</text>
      </g>
    </svg>
    <button className="flex items-center justify-center gap-2 w-[84px] h-[26px] mt-[13px] rounded border border-[#7c808a] bg-[#8f929b] text-base leading-5 text-[#4a4e58]">
      未命名
      <Down w={12} h={7} fill="#c9ccd3" />
    </button>
  </div>
);

const NavBar = () => (
  <div className="absolute right-1 top-[220px] w-[46px] h-[310px] flex flex-col items-center rounded bg-[#565b62]/90">
    <Svg w={12} className="self-end mt-[2px] mr-1"><circle cx="12" cy="12" r="10" fill="#484c53" /></Svg>
    <button aria-label="全导航控制盘" className="mt-[10px]"><Svg w={36} vb="0 0 36 36"><path d="M18 2h15v16A15 15 0 1 1 18 2z" stroke="#3c4047" strokeWidth="2" /><circle cx="18" cy="18" r="9" stroke="#3c4047" strokeWidth="2" /><path d="m12 24-6 6M24 24l6 5" stroke="#3c4047" strokeWidth="2" /></Svg></button>
    <Down className="mt-2" fill="#3c4047" />
    <button aria-label="动态观察" className="mt-auto"><Svg w={36} vb="0 0 36 36"><path d="M15 34V10h-4l7-8 7 8h-4v24z" stroke="#3c4047" strokeWidth="1.500" /><path d="M6 22c-16-8 40-10 24 1-3 2-9 3-14 3" stroke="#3c4047" strokeWidth="2" /><path d="m5 26 7-5v9z" fill="#3c4047" /></Svg></button>
    <Down className="mt-2 mb-4" fill="#3c4047" />
    <button aria-label="ShowMotion"><Svg w={36} h={38} vb="0 0 36 38"><path d="M1 1h9v9H1zM13 1h9v9h-9zM25 1h9v9h-9zM1 16h24v19H1z" stroke="#3c4047" strokeWidth="2" /><path d="m9 20 8 5-8 6z" fill="#3c4047" /></Svg></button>
    <Svg w={12} className="self-end mt-2 mr-1 mb-1"><circle cx="12" cy="12" r="10" stroke="#484c53" strokeWidth="3" /></Svg>
  </div>
);

const NetMeter = () => (
  <div className="absolute right-1 top-[303px] flex items-center font-['Open_Sans','Noto_Sans_CJK_SC',sans-serif]">
    <div className="w-[118px] h-16 -mr-7 pl-4 flex flex-col justify-around rounded-l-[32px] bg-[#171a26] text-[#e8eaf0]">
      <div className="flex items-center">
        <Svg w={11} vb="0 0 11 11"><path d="M5.500 11V2M1 6l4.500-4L10 6" stroke="#3aa8f0" strokeWidth="2.500" /></Svg>
        <span className="w-[42px] text-right pr-px text-lg leading-6 font-semibold">0</span>
        <span className="text-sm text-[#9a9dab]">K/s</span>
      </div>
      <div className="flex items-center">
        <Svg w={11} vb="0 0 11 11"><path d="M5.500 0v9M1 5l4.500 4L10 5" stroke="#2bb23c" strokeWidth="2.500" /></Svg>
        <span className="w-[42px] text-right pr-px text-lg leading-6 font-semibold">0.1</span>
        <span className="text-sm text-[#9a9dab]">K/s</span>
      </div>
    </div>
    <div className="relative flex items-center justify-center w-[88px] h-[88px] rounded-full bg-[#2a2d3f] shadow-[0_0_5px_#111]">
      <svg className="absolute inset-0" width="88" height="88" viewBox="0 0 88 88" fill="none">
        <defs>
          <linearGradient id="ring" x1="0" y1="0" x2="0" y2="1">
            <stop stopColor="#35b7c9" />
            <stop offset=".6" stopColor="#7ccf8b" />
            <stop offset="1" stopColor="#e8b63c" />
          </linearGradient>
        </defs>
        <path d="M44 6a38 38 0 1 1-28 64" stroke="url(#ring)" strokeWidth="3" />
      </svg>
      <span className="text-4xl font-light text-[#eceef4]">63</span>
      <span className="self-end mb-6 text-sm text-[#eceef4]">%</span>
    </div>
  </div>
);

const CommandLine = () => (
  <div className="absolute bottom-0 left-[383px] right-[370px] flex h-10 border-2 border-[#5c6068] rounded-sm bg-[#bbbdbf]">
    <div className="flex items-center w-[80px] pl-[10px] bg-linear-to-b from-[#6a6a6a] to-[#444]">
      <Svg w={3} h={30} vb="0 0 3 30"><path d="M1.500 0v30" stroke="#aaa" strokeWidth="2" strokeDasharray="2 2" /></Svg>
      <button aria-label="关闭命令行" className="ml-[9px]"><Svg w={14}><path d="m2 2 20 20M22 2 2 22" stroke="#ddd" strokeWidth="4" /></Svg></button>
      <button aria-label="自定义命令行" className="ml-4"><Svg w={20}><path d="M2 2c4-2 9 0 9 6l12 12-3 4L8 12C3 13-1 9 1 5l4 4 3-3z" fill="#ddd" /></Svg></button>
    </div>
    <button aria-label="最近的命令" className="flex items-center gap-1 ml-2">
      <Svg w={24} vb="0 0 24 24"><rect x=".5" y=".5" width="23" height="23" rx="2" fill="#aebac8" stroke="#7b8696" /><path d="m5 7 6 5-6 5M12 18h7" stroke="#3c4452" strokeWidth="2" /></Svg>
      <Down w={8} h={5} fill="#555" />
    </button>
    <input aria-label="命令" placeholder="键入命令" className="flex-1 min-w-0 ml-3 text-xl leading-8 italic outline-none placeholder-[#6c6e70]" />
    <button aria-label="命令历史" className="pr-1"><Svg w={12} h={8} vb="0 0 12 8"><path d="m6 0 6 8H0z" fill="#111" /></Svg></button>
  </div>
);

const LayoutTab = ({ label, active }) => (
  <button className={`relative w-[84px] h-[27px] -mr-[6px] leading-6 ${active ? 'font-bold text-white' : 'text-[#b4b4b4]'}`}>
    <Svg w={84} h={27} vb="0 0 88 27" className="absolute left-0 top-0">
      <path d="M0 0h88c-9 3-8 12-11 20q-2 7-7 7H18q-5 0-7-7C8 12 9 3 0 0" fill={active ? '#727272' : '#545454'} />
    </Svg>
    <span className="relative">{label}</span>
  </button>
);

const LayoutTabs = () => (
  <div className="flex h-[30px] shrink-0 pl-2 border-t-2 border-[#55565a] bg-[#373737]">
    <LayoutTab label="模型" active />
    <LayoutTab label="布局1" />
    <LayoutTab label="布局2" />
    <button aria-label="新建布局" className="ml-2"><Svg w={34} h={25} vb="0 0 34 25"><path d="M8 0h26q0 25-12 24H0Q3 2 8 0" fill="#525252" /><path d="M18 6v12M12 12h12" stroke="#ccc" strokeWidth="3" /></Svg></button>
  </div>
);

const Cell = ({ label, on, sep, end, children }) => (
  <button
    aria-label={label}
    className={`flex items-center justify-center shrink-0 ${end ? 'w-[40px] border-r-4 border-[#7a7a7a]' : 'w-[38px]'} ${sep ? 'border-r-2 border-[#7a7a7a]' : ''}`}
  >
    <span className={`flex items-center justify-center w-[34px] h-[35px] ${on ? 'bg-[#5f90c8]' : ''}`}>
      <Svg>{children}</Svg>
    </span>
  </button>
);

const More = ({ sep }) => (
  <button aria-label="选项" className={`flex items-center justify-center w-[22px] shrink-0 ${sep ? 'border-r-2 border-[#7a7a7a]' : ''}`}>
    <Down w={10} h={7} />
  </button>
);

const L = { stroke: '#fff', strokeWidth: 1.300 };

const StatusBar = () => (
  <footer className="flex justify-end h-10 shrink-0 bg-[#373737] text-white">
    <div className="flex w-[1764px] min-w-0 border-t-[3px] border-l-2 border-[#7a7a7a] bg-[#4e4e4e]">
      <div className="flex flex-1 items-center justify-end pr-2 border-r-4 border-[#7a7a7a] text-[17px] font-semibold whitespace-nowrap">5054.1737, 829.8182, 0.0000</div>
      <button className="w-[46px] shrink-0 border-r-2 border-[#7a7a7a] font-medium">模型</button>
      <Cell label="栅格" on><path d="M6 0v24M12 0v24M18 0v24M0 6h24M0 12h24M0 18h24" {...L} /></Cell>
      <Cell label="捕捉"><path d="M3 4h3M11 4h3M19 4h3M3 12h3M11 12h3M19 12h3M3 20h3M11 20h3M19 20h3" stroke="#e0e0e0" strokeWidth="3" /></Cell>
      <More sep />
      <Cell label="推断约束" sep><path d="M12 18V1h11v9H12" {...L} /><path d="M1 14h10v9H1z" fill="#ddd" /></Cell>
      <Cell label="动态输入" on sep><path d="M5 2v12M0 8h10" {...L} /><path d="M8 15h16v8H8z" fill="#fff" /><path d="M10 17h3v4h-3z" fill="#5f90c8" /></Cell>
      <Cell label="正交"><path d="M1 0v23h23M1 16h7v7" stroke="#ddd" strokeWidth="1.300" /></Cell>
      <Cell label="极轴追踪" on><circle cx="10" cy="12" r="9" {...L} /><path d="M10 12h14M10 12 20 1" {...L} /></Cell>
      <More />
      <Cell label="等轴测草图"><path d="M3 1 21 21" stroke="#d9707a" /><path d="M12 0v24" stroke="#5fc79a" /><path d="M10 10h4v4h-4z" fill="#4e4e4e" stroke="#fff" /></Cell>
      <More sep />
      <Cell label="对象捕捉追踪" on><path d="M18 2 1 22h23" {...L} /><circle cx="10" cy="12" r="2.500" fill="#fff" /></Cell>
      <Cell label="对象捕捉" on><path d="M6 4h17v20H3V8" {...L} /><path d="M0 1h6v6H0z" {...L} /></Cell>
      <More sep />
      <Cell label="线宽" sep><path d="M0 4h24M0 12h24M0 20h24" stroke="#ddd" /><path d="M0 5h13M0 12h13M0 20h13" stroke="#ddd" strokeWidth="4" /></Cell>
      <Cell label="透明度" on sep>
        <path d="M.5.5h23v23H.5z" {...L} />
        <path d="M5 1h4.500v4.500H5zM14 1h4.500v4.500H14zM1 5.500h4.500V10H1zM9.500 5.500H14V10H9.500zM18.500 5.500H23V10h-4.500zM5 10h4.500v4.500H5zM14 10h4.500v4.500H14zM1 14.500h4.500V19H1zM9.500 14.500H14V19H9.500zM18.500 14.500H23V19h-4.500zM5 19h4.500v4H5zM14 19h4.500v4H14z" fill="#fff" />
      </Cell>
      <Cell label="选择循环" sep><path d="M4 0v8M0 4h8M6 20V7h14" stroke="#ddd" /><path d="M9 9h15v15H9z" fill="#7dd0a0" /></Cell>
      <Cell label="三维对象捕捉"><path d="M5 17V5h13v16H8M5 5l5-4h13v15l-5 5M18 5l5-4" stroke="#ddd" strokeWidth="1.200" /><path d="M1 18h6v6H1z" stroke="#e89880" strokeWidth="1.300" /></Cell>
      <More sep />
      <Cell label="动态UCS" on><path d="M4 4v17h15" {...L} /><path d="M4 0 0 7h8zM24 21l-6-4v8zM17 4l-6 9h4l-1 6 6-9h-4z" fill="#fff" /></Cell>
      <Cell label="选择过滤"><path d="M1 6h16v17H1zM1 6l6-5h15v17l-5 5" stroke="#ddd" strokeWidth="1.300" /><path d="M0 7h18" stroke="#80c4ff" strokeWidth="3" /></Cell>
      <More />
      <Cell label="小控件" on><path d="m12 3 9 5v9l-9 6-9-6V8zM12 3v10M3 18l9-5 9 5" {...L} /><path d="M10 0h4v4h-4zM10 11h4v4h-4zM1 17h4v4H1zM19 17h4v4h-4z" fill="#5f90c8" {...L} /></Cell>
      <More sep />
      <Cell label="注释可见性" on><path d="m10 0 4 14 6 9-8-4h-4l-8 4 6-9z" fill="#fff" /><circle cx="19" cy="5" r="4" {...L} /></Cell>
      <Cell label="自动缩放"><path d="m10 0 4 14 6 9-8-4h-4l-8 4 6-9z" fill="#ddd" /><path d="m21 0-6 6h3l-1 6 6-7h-3z" fill="#ddd" /></Cell>
      <Cell label="注释"><path d="m12 0 4 14 6 9-8-4h-4l-8 4 6-9z" fill="#ddd" /></Cell>
      <button className="w-[28px] shrink-0 text-base">1:1</button>
      <More sep />
      <Cell label="切换工作空间">
        <circle cx="12" cy="12" r="6" stroke="#ddd" strokeWidth="5" />
        <path d="M12 0v5M12 19v5M0 12h5M19 12h5M3.500 3.500 7 7M17 17l3.500 3.500M3.500 20.500 7 17M17 7l3.500-3.500" stroke="#ddd" strokeWidth="4" />
      </Cell>
      <More sep />
      <Cell label="注释监视器" end><path d="M12 0v24M0 12h24" stroke="#ddd" strokeWidth="3" /></Cell>
      <label className="flex items-center w-[150px] shrink-0 pl-3 pr-2 border-r-2 border-[#7a7a7a]">
        <Svg w={14} h={24} vb="0 0 14 24"><path d="M0 0h14v3H8v2h4v2H8v2h4v2H8v2h4v2H8v2h4v2H8v2h6v3H0z" fill="#ddd" /></Svg>
        <select aria-label="单位" className="appearance-none flex-1 pl-5 text-lg font-medium outline-none"><option>小数</option></select>
        <Down w={10} h={7} />
      </label>
      <Cell label="快捷特性" end><path d="M4 1h16v22H4z" stroke="#ddd" strokeWidth="1.300" /><path d="M4 3h16" stroke="#ddd" strokeWidth="3" /><path d="M7 9h3M12 9h6M7 14h3M12 14h6M7 19h3M12 19h6" stroke="#ddd" strokeWidth="2" /></Cell>
      <Cell label="锁定用户界面"><path d="M9 17H1V1h20v9" stroke="#ddd" strokeWidth="1.300" /><path d="M1 2h20" stroke="#ddd" strokeWidth="2" /><path d="M10 15h11v9H10z" fill="#ddd" /><path d="M18 15v-3a3 3 0 0 1 6 0v3" stroke="#ddd" strokeWidth="1.500" /></Cell>
      <More sep />
      <Cell label="隔离对象" end><path d="M1 1h9v9H1zM9 15l5 8H4z" stroke="#ddd" strokeWidth="1.300" /><circle cx="18" cy="11" r="5.500" stroke="#ddd" strokeWidth="1.300" /></Cell>
      <Cell label="硬件加速" on end><circle cx="12" cy="12" r="11" fill="#9dbbe0" {...L} /><path d="m11 17 8-10-6 12z" fill="#fff" stroke="#fff" /></Cell>
      <div className="w-2 shrink-0 border-r-2 border-[#7a7a7a]" />
      <Cell label="全屏显示"><path d="M1 4h22v17H1z" stroke="#ddd" strokeWidth="1.300" /><path d="M20 6v6l-6-6zM4 19v-6l6 6zM16 11l3-3M5 18l4-4" fill="#ddd" stroke="#ddd" /></Cell>
      <Cell label="自定义"><path d="M0 3h24M0 12h24M0 21h24" stroke="#ddd" strokeWidth="3" /></Cell>
    </div>
  </footer>
);

const Cursor = () => (
  <svg className="absolute left-[437px] top-[112px]" width="20" height="28" viewBox="0 0 20 28" aria-hidden="true">
    <path d="M1 1v21l5-4 4 9 4-2-4-9h7z" fill="#fff" stroke="#111" />
  </svg>
);

export default function App() {
  return (
    <div className="h-screen p-2 bg-white overflow-hidden text-lg font-['Noto_Sans','Noto_Sans_CJK_SC',sans-serif]">
      <div className="relative flex flex-col h-full shadow-[0_0_6px_1px_#777]">
        <Header />
        <RibbonTabs />
        <Ribbon />
        <DocTabs />
        <main className="relative flex flex-1 min-h-0 bg-[#212733]">
          <div className="relative flex-1 min-w-0 overflow-hidden">
            <Drawing />
            <div className="relative pl-[2px] pt-[3px] text-[19px] leading-7 text-[#e6e6e6]">[−][西南等轴测][概念]</div>
            <ViewCube />
            <NavBar />
            <CommandLine />
          </div>
          <div className="w-[9px] mr-[5px] border-r-2 border-[#86c8f0] bg-[#bcd0f0]" />
          <NetMeter />
        </main>
        <LayoutTabs />
        <StatusBar />
        <Cursor />
      </div>
    </div>
  );
}
